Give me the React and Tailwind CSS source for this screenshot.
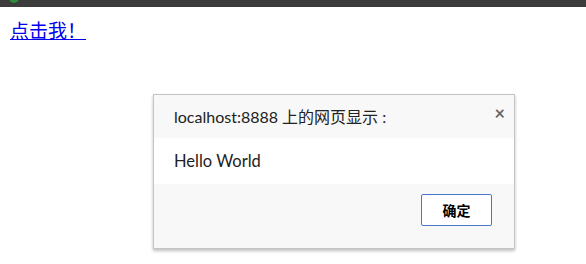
export default function App() {
  return (
    <div className="relative w-[586px] h-[264px] bg-white overflow-hidden" style={{ fontFamily: '"Liberation Sans", "Noto Sans CJK SC", sans-serif' }}>
      <div className="relative h-[7px] bg-[#3c3c3c] overflow-hidden">
        <div className="absolute left-[9px] top-[-7px] w-[10px] h-[10px] rounded-full bg-[#2e8b3a]"></div>
      </div>
      <div className="pl-[10px] pt-[10px]">
        <a href="#" className="text-[19px] leading-[25px] text-[#0000ee] underline" style={{ fontFamily: '"Noto Sans CJK SC", sans-serif' }}>点击我！</a>
      </div>
      <div className="absolute left-[153px] top-[94px] w-[362px] h-[155px] border border-[#c4c4c4] shadow-[0_2px_3px_rgba(0,0,0,0.25)] flex flex-col" style={{ fontFamily: '"Lato", "Noto Sans CJK SC", sans-serif' }}>
        <div className="relative h-[43px] bg-[#f8f8f8] flex items-center pl-[20px] text-[16px] text-[#222]">
          localhost:8888 上的网页显示 :
          <span className="absolute right-[9px] top-[5px] text-[18px] font-bold text-[#666]">×</span>
        </div>
        <div className="h-[46px] bg-white flex items-center pl-[20px] text-[16.5px] text-[#222]">Hello World</div>
        <div className="flex-1 bg-[#f8f8f8] flex justify-end items-start pt-[10px] pr-[22px]">
          <button className="w-[71px] h-[32px] border border-[#4a78c8] rounded-[2px] bg-white text-[14px] font-bold text-black" style={{ fontFamily: '"Noto Sans CJK SC", sans-serif' }}>确定</button>
        </div>
      </div>
    </div>
  );
}
